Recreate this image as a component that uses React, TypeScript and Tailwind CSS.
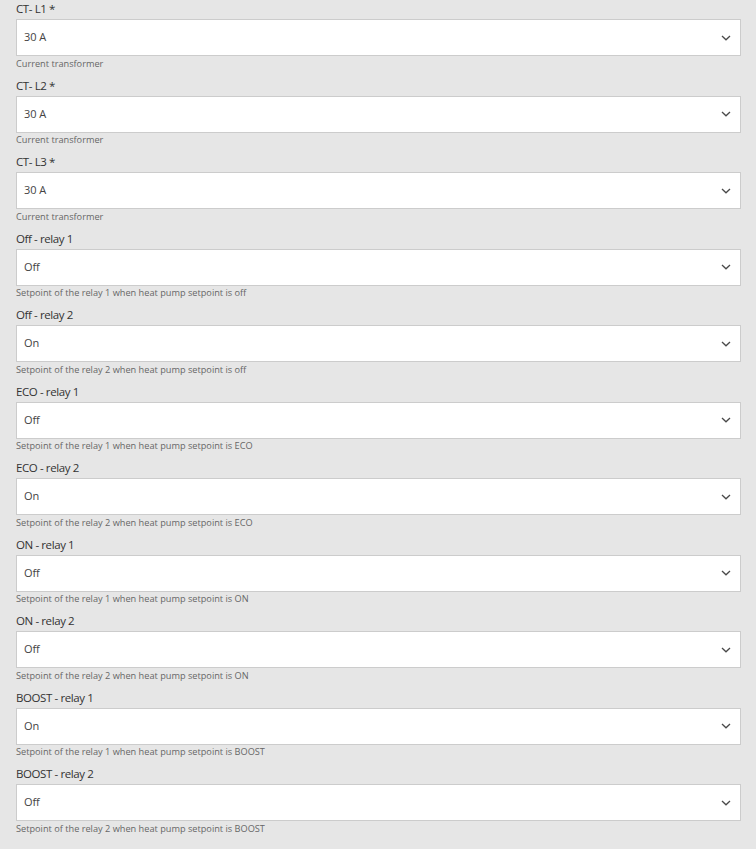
import React from "react";

type Field = { label: string; value: string; help: string };

const fields: Field[] = [
  { label: "CT- L1 *", value: "30 A", help: "Current transformer" },
  { label: "CT- L2 *", value: "30 A", help: "Current transformer" },
  { label: "CT- L3 *", value: "30 A", help: "Current transformer" },
  { label: "Off - relay 1", value: "Off", help: "Setpoint of the relay 1 when heat pump setpoint is off" },
  { label: "Off - relay 2", value: "On", help: "Setpoint of the relay 2 when heat pump setpoint is off" },
  { label: "ECO - relay 1", value: "Off", help: "Setpoint of the relay 1 when heat pump setpoint is ECO" },
  { label: "ECO - relay 2", value: "On", help: "Setpoint of the relay 2 when heat pump setpoint is ECO" },
  { label: "ON - relay 1", value: "Off", help: "Setpoint of the relay 1 when heat pump setpoint is ON" },
  { label: "ON - relay 2", value: "Off", help: "Setpoint of the relay 2 when heat pump setpoint is ON" },
  { label: "BOOST - relay 1", value: "On", help: "Setpoint of the relay 1 when heat pump setpoint is BOOST" },
  { label: "BOOST - relay 2", value: "Off", help: "Setpoint of the relay 2 when heat pump setpoint is BOOST" },
];

function Chevron() {
  return (
    <svg width="10" height="6" viewBox="0 0 10 6" className="shrink-0">
      <path d="M1 1 L5 4.8 L9 1" fill="none" stroke="#4a4a4a" strokeWidth="1.3" />
    </svg>
  );
}

export default function App() {
  return (
    <div
      className="min-h-screen bg-[#e6e6e6] pl-4 pr-[15px]"
      style={{ fontFamily: '"Open Sans", "Noto Sans", sans-serif' }}
    >
      {fields.map((f, i) => (
        <div key={i} className="h-[76.5px]">
          <div className="pb-[1px] text-[11.5px] leading-[18px] tracking-[-0.4px] text-[#333]">{f.label}</div>
          <div className="flex h-[37px] items-center justify-between border border-[#cccccc] bg-white pl-[7px] pr-[9px]">
            <span className="text-[11px] tracking-[-0.1px] text-[#444]">{f.value}</span>
            <Chevron />
          </div>
          <div className="pt-[0.5px] text-[9.2px] leading-[14px] text-[#666]">{f.help}</div>
        </div>
      ))}
    </div>
  );
}
